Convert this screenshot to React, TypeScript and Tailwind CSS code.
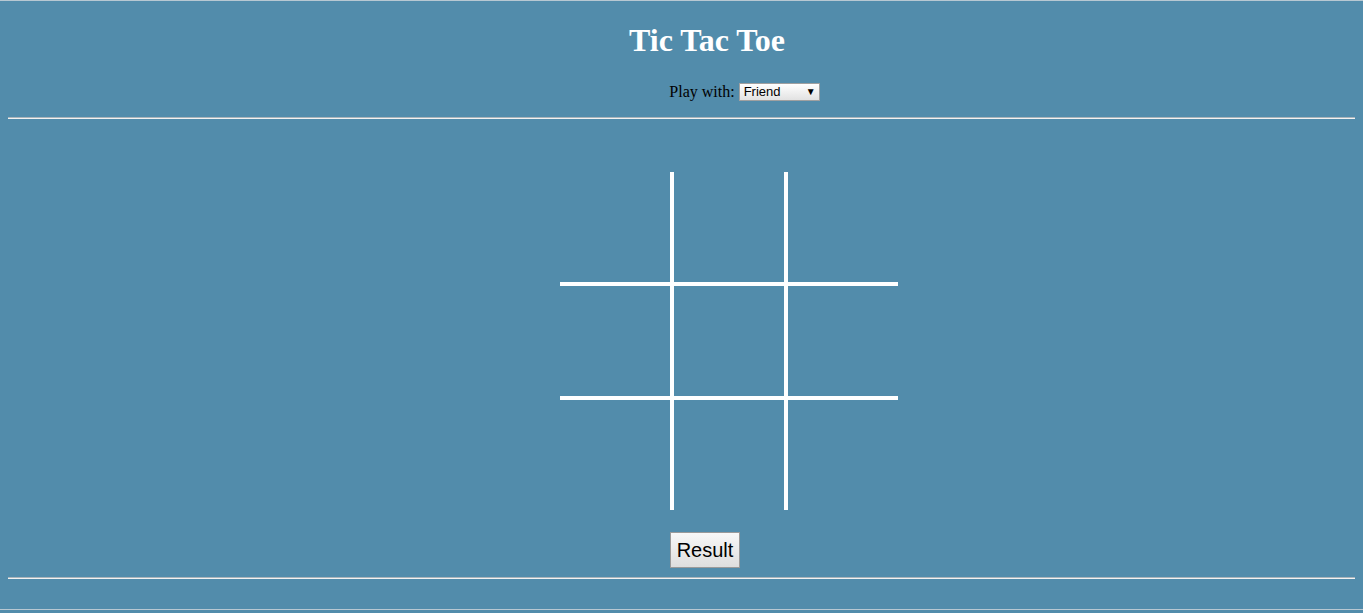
import React from "react";

export default function App() {
  const cells = Array.from({ length: 9 }, (_, i) => i);
  return (
    <div
      className="min-h-[613px] w-full bg-[#528cab] border-t border-[#b8c8d2] flex flex-col"
      style={{ fontFamily: '"Liberation Serif", "Times New Roman", serif' }}
    >
      <div className="flex justify-center pl-[51px] mt-[21px]">
        <h1 className="text-[32px] leading-[37px] font-bold text-white">Tic Tac Toe</h1>
      </div>
      <div className="flex justify-center items-center pl-[126px] mt-[24px] h-[18px]">
        <span className="text-[16px] text-black leading-[18px]">Play with:</span>
        <div
          className="ml-[4px] w-[81px] h-[18px] border border-[#a0a0a0] bg-gradient-to-b from-white to-[#e2e2e2] flex items-center justify-between pl-[4px] pr-[3px] text-[13px] text-black"
          style={{ fontFamily: '"Liberation Sans", Arial, sans-serif' }}
        >
          <span>Friend</span>
          <span className="text-[10px] leading-none">▼</span>
        </div>
      </div>
      <div className="mx-2 mt-[16px] border-t border-b border-t-[#a9b4ba] border-b-[#f2f2f2]" />
      <div className="flex justify-center pl-[95px] mt-[53px]">
        <div className="grid grid-cols-[114px_114px_110px] grid-rows-[114px_114px_110px]">
          {cells.map((i) => {
            const col = i % 3;
            const row = Math.floor(i / 3);
            return (
              <div
                key={i}
                className={`${col < 2 ? "border-r-4" : ""} ${row < 2 ? "border-b-4" : ""} border-white`}
              />
            );
          })}
        </div>
      </div>
      <div className="flex justify-center pl-[47px] mt-[22px]">
        <button
          className="w-[70px] h-[36px] border border-[#9a9a9a] bg-gradient-to-b from-[#f8f8f8] to-[#dedede] text-[20px] text-black"
          style={{ fontFamily: '"Liberation Sans", Arial, sans-serif' }}
        >
          Result
        </button>
      </div>
      <div className="mx-2 mt-[9px] border-t border-b border-t-[#a9b4ba] border-b-[#f2f2f2]" />
      <div className="mt-[30px] border-b border-[#b8c8d2]" />
    </div>
  );
}
